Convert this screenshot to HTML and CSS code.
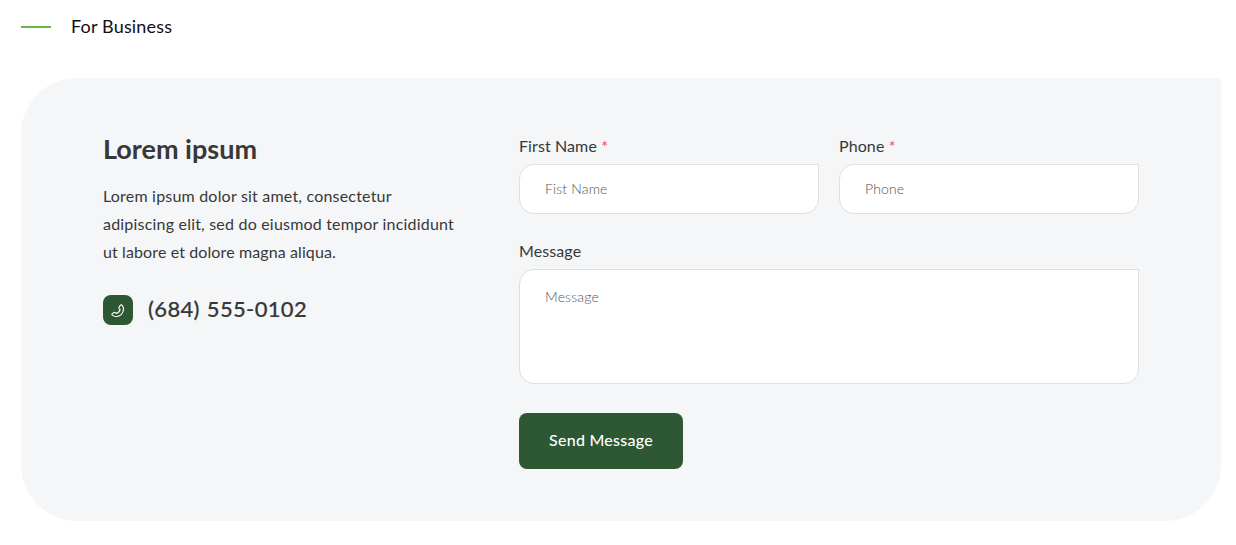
FILE: index.html
```html
<!DOCTYPE html>
<html lang="en">
<head>
<meta charset="utf-8">
<title>For Business</title>
<link rel="stylesheet" href="styles.css">
</head>
<body>
<main class="page">
  <header class="eyebrow"><span class="eyebrow-line"></span><span class="eyebrow-text">For Business</span></header>
  <section class="panel">
    <div class="intro">
      <h2 class="title">Lorem ipsum</h2>
      <p class="copy">Lorem ipsum dolor sit amet, consectetur<br>adipiscing elit, sed do eiusmod tempor incididunt<br><span class="copy-last">ut labore et dolore magna aliqua.</span></p>
      <div class="contact">
        <span class="contact-icon"><svg width="14" height="14" viewBox="0 0 14 14" fill="none" stroke="currentColor" stroke-width="1.1" stroke-linejoin="round" stroke-linecap="round"><path d="M9.3 1.3 C9.9.7 10.7.8 11.2 1.4 C12.4 2.8 12.8 4.8 12.3 6.7 C11.5 9.9 8.7 12.3 5.4 12.5 C3.8 12.6 2.3 12.1 1.3 11.2 C.8 10.7.8 10.1 1.3 9.7 L3 8.5 C3.5 8.2 4 8.3 4.4 8.7 L5.1 9.4 C7 8.9 8.6 7.4 9.1 5.5 L8.3 4.8 C7.9 4.4 7.8 3.9 8 3.4 Z"/></svg></span>
        <span class="contact-number">(684) 555-0102</span>
      </div>
    </div>
    <form class="form">
      <div class="row">
        <div class="field"><label class="label" for="first">First Name <span class="required">*</span></label><input class="input" id="first" placeholder="Fist Name"></div>
        <div class="field"><label class="label" for="phone">Phone <span class="required">*</span></label><input class="input" id="phone" placeholder="Phone"></div>
      </div>
      <div class="field field-message"><label class="label" for="message">Message</label><textarea class="input textarea" id="message" placeholder="Message"></textarea></div>
      <button class="send" type="button">Send Message</button>
    </form>
  </section>
</main>
</body>
</html>
```
FILE: styles.css
```css
* { box-sizing: border-box; }
body { margin: 0; background: #fff; color: #383838; font-family: Lato, "Open Sans", sans-serif; overflow: hidden; }
.page { padding: 12px 15px 24px 21px; }
.eyebrow { display: flex; align-items: center; gap: 20px; height: 30px; color: #111; font-size: 18px; letter-spacing: .17px; }
.eyebrow-text { padding-bottom: 2px; }
.eyebrow-line { width: 30px; height: 2px; background: #69b745; }
.panel { display: grid; grid-template-columns: 376px 620px; column-gap: 40px; width: 1200px; height: 443px; margin-top: 36px; padding: 56px 82px 52px; background: #f4f6f8; border-radius: 56px 0 56px 56px; }
.title { margin: 0; font-size: 27px; line-height: 30px; font-weight: 700; }
.copy { margin: 18px 0 0; font-size: 16px; line-height: 28px; letter-spacing: .2px; white-space: nowrap; }
.copy-last { letter-spacing: .11px; }
.contact { display: flex; align-items: center; gap: 15px; height: 30px; margin-top: 29px; }
.contact-icon { display: flex; align-items: center; justify-content: center; width: 30px; height: 30px; padding-top: 2px; border-radius: 8px; background: #2d5833; color: #fff; }
.contact-number { padding-bottom: 2px; font-size: 22px; line-height: 28px; font-weight: 500; letter-spacing: .35px; word-spacing: 1px; white-space: nowrap; -webkit-text-stroke: .2px currentColor; }
.row { display: grid; grid-template-columns: 300px 300px; gap: 20px; }
.field { display: flex; flex-direction: column; }
.field-message { margin-top: 25px; }
.label { height: 30px; line-height: 24px; font-size: 16px; letter-spacing: .1px; }
.required { color: #f04452; }
.input { width: 100%; height: 50px; padding: 0 25px 2px; border: 1px solid #dedfe0; border-radius: 15px 0 15px 15px; background: #fff; font: 300 14px Lato, sans-serif; letter-spacing: .15px; }
.input::placeholder { color: #555; opacity: 1; }
.textarea { height: 115px; padding-top: 18px; resize: none; display: block; }
.send { display: block; width: 164px; height: 56px; margin-top: 29px; padding: 0 0 3px; border: 0; border-radius: 8px; background: #2d5833; color: #fff; font: 500 16px Lato, sans-serif; letter-spacing: .25px; }
```
